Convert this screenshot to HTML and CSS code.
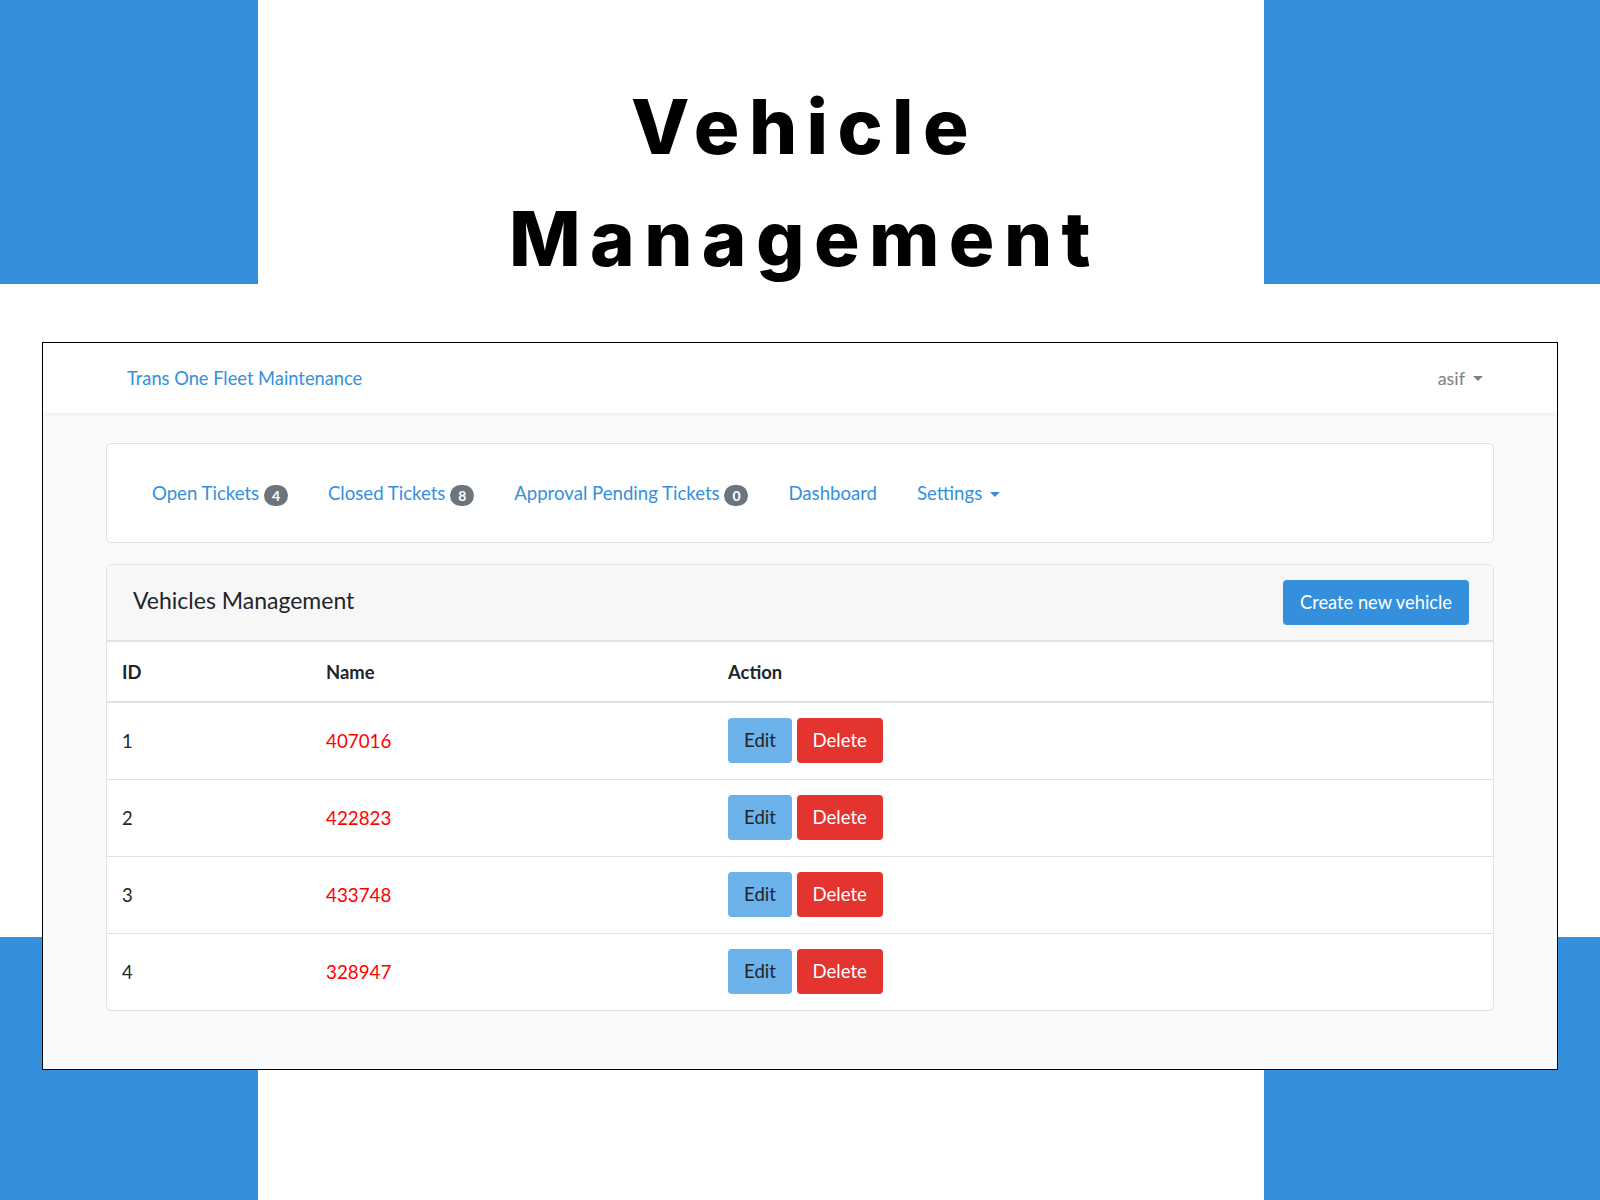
FILE: index.html
```html
<!DOCTYPE html>
<html lang="en">
<head>
<meta charset="utf-8">
<title>Vehicle Management</title>
<link rel="stylesheet" href="styles.css">
</head>
<body>
  <header class="hero">
    <h1 class="hero-title">Vehicle<br>Management</h1>
  </header>

  <div class="window">
    <nav class="topbar">
      <a class="brand" href="#">Trans One Fleet Maintenance</a>
      <a class="user" href="#">asif <span class="caret caret-gray"></span></a>
    </nav>

    <main class="content">
      <div class="card navcard">
        <ul class="tabs">
          <li><a href="#">Open Tickets <span class="badge">4</span></a></li>
          <li><a href="#">Closed Tickets <span class="badge">8</span></a></li>
          <li><a href="#">Approval Pending Tickets <span class="badge">0</span></a></li>
          <li><a href="#">Dashboard</a></li>
          <li><a href="#">Settings <span class="caret caret-blue"></span></a></li>
        </ul>
      </div>

      <div class="card vcard">
        <div class="vcard-head">
          <h2 class="vcard-title">Vehicles Management</h2>
          <button class="btn btn-primary">Create new vehicle</button>
        </div>
        <table class="vtable">
          <thead>
            <tr><th class="col-id">ID</th><th class="col-name">Name</th><th>Action</th></tr>
          </thead>
          <tbody>
            <tr><td>1</td><td class="vname">407016</td><td><button class="btn btn-info">Edit</button> <button class="btn btn-danger">Delete</button></td></tr>
            <tr><td>2</td><td class="vname">422823</td><td><button class="btn btn-info">Edit</button> <button class="btn btn-danger">Delete</button></td></tr>
            <tr><td>3</td><td class="vname">433748</td><td><button class="btn btn-info">Edit</button> <button class="btn btn-danger">Delete</button></td></tr>
            <tr><td>4</td><td class="vname">328947</td><td><button class="btn btn-info">Edit</button> <button class="btn btn-danger">Delete</button></td></tr>
          </tbody>
        </table>
      </div>
    </main>
  </div>
</body>
</html>
```

FILE: styles.css
```css
* { box-sizing: border-box; }

html, body { margin: 0; padding: 0; }

body {
  width: 1600px;
  height: 1200px;
  overflow: hidden;
  font-family: "Lato", "Open Sans", sans-serif;
  color: #212529;
  background:
    linear-gradient(#3590dc, #3590dc) left top / 258px 284px no-repeat,
    linear-gradient(#3590dc, #3590dc) right top / 336px 284px no-repeat,
    linear-gradient(#3590dc, #3590dc) left bottom / 258px 263px no-repeat,
    linear-gradient(#3590dc, #3590dc) right bottom / 336px 263px no-repeat,
    #ffffff;
}

a { text-decoration: none; }

/* ---------- hero title ---------- */
.hero {
  height: 342px;
  padding-top: 70px;
  padding-left: 9px;
  text-align: center;
}

.hero-title {
  margin: 0;
  font-family: "Inter", "DejaVu Sans", sans-serif;
  font-weight: 800;
  font-size: 76px;
  line-height: 112px;
  letter-spacing: 9.4px;
  color: #000;
}

/* ---------- window ---------- */
.window {
  margin-left: 42px;
  width: 1516px;
  border: 1px solid #000;
  background: #f8fafc;
}

.topbar {
  height: 70px;
  background: #fff;
  box-shadow: 0 2px 4px rgba(0, 0, 0, 0.05);
  display: flex;
  align-items: center;
  justify-content: space-between;
  padding: 0 74px 0 84px;
  position: relative;
}

.brand {
  font-size: 18.3px;
  color: #3490dc;
}

.user {
  font-size: 18px;
  color: #808080;
  display: flex;
  align-items: center;
}

.caret {
  display: inline-block;
  width: 0;
  height: 0;
  border-left: 5px solid transparent;
  border-right: 5px solid transparent;
  border-top: 5px solid currentColor;
  margin-left: 8px;
  vertical-align: 3px;
}

.caret-gray { color: #808080; }

.content {
  padding: 30px 63px 58px;
}

.card {
  background: #fff;
  border: 1px solid #e0e2e4;
  border-radius: 5px;
}

/* ---------- nav card ---------- */
.navcard {
  height: 100px;
  display: flex;
  align-items: center;
  padding: 0 25px;
}

.tabs {
  list-style: none;
  margin: 0;
  padding: 0;
  display: flex;
}

.tabs a {
  display: block;
  padding: 8px 20px;
  font-size: 18.6px;
  color: #3490dc;
  line-height: 26px;
}

.tabs .caret { margin-left: 3px; }

.badge {
  display: inline-block;
  min-width: 24px;
  height: 21px;
  padding: 0 7px;
  border-radius: 11px;
  background: #6c757d;
  color: #fff;
  font-size: 14px;
  font-weight: 700;
  line-height: 21px;
  text-align: center;
  vertical-align: -1px;
}

.caret-blue { color: #3490dc; }

/* ---------- vehicles card ---------- */
.vcard {
  margin-top: 21px;
  overflow: hidden;
}

.vcard-head {
  display: flex;
  align-items: center;
  justify-content: space-between;
  height: 77px;
  padding: 0 24px 0 26px;
  background: #f7f7f7;
  border-bottom: 2px solid #e3e3e3;
}

.vcard-title {
  margin: 0 0 6px;
  font-size: 23px;
  font-weight: 400;
  color: #212529;
}

.btn {
  font-family: inherit;
  font-size: 18.6px;
  height: 45px;
  padding: 0 17px;
  border: none;
  border-radius: 4px;
  cursor: pointer;
  line-height: 45px;
}

.btn-primary { background: #3490dc; color: #fff; font-size: 18.3px; }
.btn-info { background: #6cb2eb; color: #212529; width: 64px; padding: 0; }
.btn-danger { background: #e3342f; color: #fff; width: 86px; padding: 0; }

.vtable {
  width: 100%;
  border-collapse: collapse;
  font-size: 18.4px;
}

.vtable th,
.vtable td {
  text-align: left;
  padding: 0 15px;
}

.vtable th {
  height: 60px;
  font-weight: 700;
  border-bottom: 2px solid #dee2e6;
}

.vtable td {
  height: 77px;
  border-top: 1px solid #dee2e6;
}

.vtable tbody tr:first-child td { border-top: none; }

.col-id { width: 204px; }
.col-name { width: 402px; }

.vname { color: #ff0000; font-size: 18.8px; }
```
